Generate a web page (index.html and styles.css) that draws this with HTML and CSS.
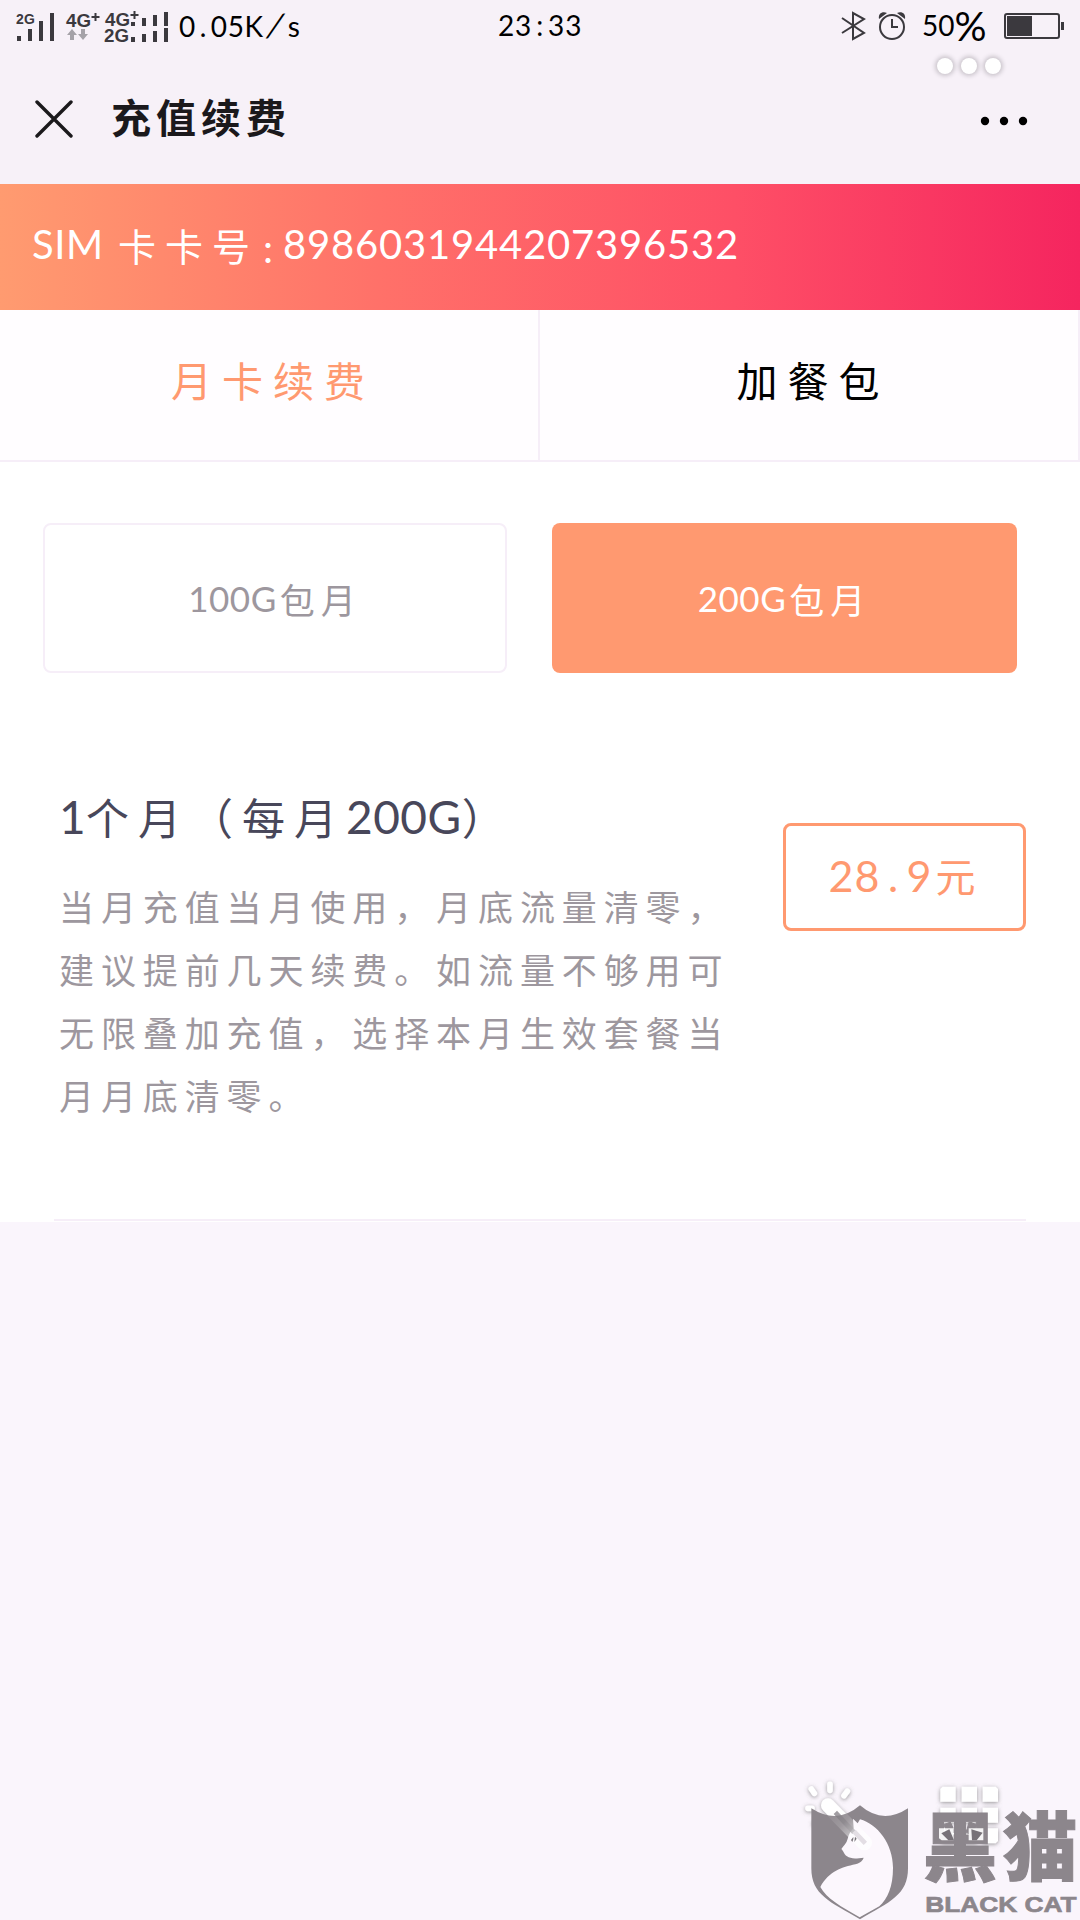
FILE: index.html
```html
<!DOCTYPE html>
<html lang="zh-CN">
<head>
<meta charset="utf-8">
<meta name="viewport" content="width=device-width,initial-scale=1">
<title>充值续费</title>
<link rel="stylesheet" href="styles.css">
</head>
<body>

<!-- ======= 状态栏 ======= -->
<div class="status">
  <svg class="signal" width="156" height="34" viewBox="0 -1 156 34">
    <g fill="#3b393e" font-family="Liberation Sans" font-weight="700">
      <text x="0" y="12" font-size="14" textLength="19">2G</text>
      <path d="M1 24h4v5H1zM12 17h4v12h-4zM23 9h4v20h-4zM34 1h4v28h-4z"/>
      <text x="50" y="14.5" font-size="18" textLength="25" lengthAdjust="spacingAndGlyphs">4G</text>
      <text x="89" y="13.5" font-size="18" textLength="25" lengthAdjust="spacingAndGlyphs">4G</text>
      <text x="88" y="29.5" font-size="18" textLength="25" lengthAdjust="spacingAndGlyphs">2G</text>
      <path d="M78.5 1h2v3h3v2h-3v3h-2V6h-3V4h3zM117.500-1h2v3h3v2h-3v3h-2V4h-3V2h3z"/>
      <path d="M115 10h4v4h-4zM126 6h4v8h-4zM137 3h4v11h-4zM148 0h4v14h-4zM115 25h4v5h-4zM126 22h4v8h-4zM137 19h4v11h-4zM148 16h4v14h-4z"/>
    </g>
    <path fill="#a5a2a8" d="M56 17l5 6h-3v5h-4v-5h-3zM67 28l-5-6h3v-5h4v5h3z"/>
  </svg>
  <span class="speed">0<i>.</i>05K<em>/</em>s</span>
  <span class="clock">23<i>:</i>33</span>
  <svg class="bt" width="26" height="30" viewBox="0 0 26 30" fill="none" stroke="#3b393e" stroke-width="2">
    <path d="M1 7l22 15-11 6V2l11 6L1 22"/>
  </svg>
  <svg class="alarm" width="28" height="30" viewBox="0 0 28 30" fill="none" stroke="#3b393e" stroke-width="2">
    <circle cx="14" cy="16" r="12"/><path d="M14 8v8h6"/>
    <path fill="#3b393e" stroke="none" d="M1 8C0 3 4 0 9 2zM27 8c1-5-3-8-8-6z"/>
  </svg>
  <span class="percent">50<b>%</b></span>
  <svg class="battery" width="60" height="26" viewBox="0 0 60 26">
    <rect x="1" y="1" width="54" height="24" rx="2" fill="none" stroke="#3b393e" stroke-width="2"/>
    <path fill="#3b393e" d="M3 3h25v20H3zM57 9h3v8h-3z"/>
  </svg>
</div>

<!-- ======= 标题栏 ======= -->
<header class="topbar">
  <svg width="38" height="38" viewBox="0 0 38 38" stroke="#1b191c" stroke-width="3.4" stroke-linecap="round">
    <path d="M2 2l34 34M36 2L2 36"/>
  </svg>
  <h1>充值续费</h1>
  <svg class="more" width="48" height="10" viewBox="0 0 48 10">
    <circle cx="5" cy="5" r="4.2"/><circle cx="24" cy="5" r="4.2"/><circle cx="43" cy="5" r="4.2"/>
  </svg>
</header>

<div class="sim"><span class="sim-en">SIM</span><span class="sim-cn">卡卡号</span><span class="colon">:</span><span class="sim-no">8986031944207396532</span></div>

<nav class="tabs">
  <a class="tab active">月卡续费</a>
  <a class="tab">加餐包</a>
</nav>

<!-- ======= 套餐 ======= -->
<section class="content">
  <div class="plans">
    <div class="plan"><span>100G</span>包月</div>
    <div class="plan on"><span>200G</span>包月</div>
  </div>
  <div class="item">
    <div class="info">
      <h2><span class="one">1</span>个月（每月<span>200G</span>）</h2>
      <p>当月充值当月使用，月底流量清零，建议提前几天续费。如流量不够用可无限叠加充值，选择本月生效套餐当月月底清零。</p>
    </div>
    <div class="price">28<i>.</i>9<span>元</span></div>
  </div>
</section>

<!-- ======= 悬浮元素 ======= -->
<div class="float-dots"><span></span><span></span><span></span></div>

<svg class="watermark" viewBox="0 0 900 480">
  <defs>
    <filter id="glow" x="-20%" y="-20%" width="140%" height="140%">
      <feDropShadow dx="0" dy="3" stdDeviation="6" flood-color="#666" flood-opacity=".7"/>
    </filter>
    <linearGradient id="wand" x1="0" y1="0" x2="1" y2="1">
      <stop offset="0" stop-color="#fff" stop-opacity="0"/>
      <stop offset=".45" stop-color="#fff" stop-opacity=".15"/>
      <stop offset="1" stop-color="#fff" stop-opacity=".8"/>
    </linearGradient>
  </defs>
  <!-- 魔术棒 + 九宫格 -->
  <g fill="#fff" filter="url(#glow)">
    <path stroke="#fff" stroke-width="17" stroke-linecap="round" d="M150 73v18M94 87l9 13M202 94l-10 13M84 145h12M105 190l4-4"/>
    <path stroke="#fff" stroke-width="42" stroke-linecap="round" d="M144 136l109 112"/>
    <path d="M488 80h39v45h-46V87zM545 80h46v45h-46zM608 80h39l7 7v38h-46z"/>
    <path d="M481 143h46v45h-46zM545 143h46v45h-46zM608 143h46v45h-46z"/>
    <path d="M481 205h46v45h-39l-7-7zM545 205h46v45h-46zM608 205h46v38l-7 7h-39z"/>
  </g>
  <!-- 盾牌 -->
  <path fill="#8c868c" d="M94 145Q172 195 240 136Q308 195 384 145V325C384 405 330 425 240 478C150 425 94 405 94 325Z"/>
  <path fill="#fcf7fd" d="M219 176l14 14 7-12c52 14 99 74 99 145 0 57-16 92-41 116l-59 33c-57-33-100-57-118-91 26-48 65-59 105-68 17-5 22-12 25-20-23 3-39 4-50-4-10-7-10-16-17-22 6-9 16-17 19-31 4-14 8-22 18-31z"/>
  <path fill="none" stroke="#777278" stroke-width="14" opacity=".75" d="M166 157l56 60"/>
  <path fill="none" stroke="url(#wand)" stroke-width="46" stroke-linecap="round" d="M144 136l109 112"/>
  <path fill="none" stroke="#e3dee4" stroke-width="14" d="M222 214l34 36"/>
  <path fill="#777278" d="M213 240l7-9v6l-3 9zM225 230l5 6-7 10z"/>
  <g fill="#8c868c" stroke="#8c868c" font-weight="900">
    <text class="cn" x="428" y="346">黑</text>
    <text class="cn" x="668" y="346">猫</text>
    <text class="en" x="436" y="456" textLength="454" lengthAdjust="spacingAndGlyphs" stroke-width="2">BLACK CAT</text>
  </g>
  <path fill="#fff" opacity=".9" d="M477 205h44v36h-36l-8-6zM566 205h44v36h-44z"/>
  <path fill="#777278" d="M484 220l24-12 14 33h-17zM574 208l34 10-18 23h-14z"/>
</svg>

</body>
</html>
```
FILE: styles.css
```css
/* ---------- 颜色 ---------- */
:root{
  --bg:#faf5fc;
  --bar:#f7f1f8;
  --line:#f6eef8;
  --orange:#ff9970;
  --muted:#9d979e;
  --title:#48475a;
}

*{margin:0;padding:0;box-sizing:border-box;}
body{position:relative;width:1080px;height:1920px;overflow:hidden;background:var(--bg);
  font-family:Lato,"Noto Sans CJK SC",sans-serif;color:#000;}
i,em{font-style:normal;display:inline-block;text-align:center;}

/* ---------- 状态栏 ---------- */
.status{display:flex;align-items:center;height:52px;padding-left:16px;background:var(--bar);font-size:28px;line-height:50px;}
.status span{white-space:nowrap;height:52px;}
.signal{margin-top:4px;}
.speed{width:126px;margin-left:7px;letter-spacing:.6px;}
.speed i{width:15px;}
.speed em{width:24px;font-size:32px;transform:skewX(-16deg);}
.clock{width:86px;margin-left:193px;letter-spacing:.8px;}
.clock i{width:16px;}
.bt{margin-left:257px;}
.alarm{margin-left:11px;}
.percent{width:68px;margin-left:16px;}
.percent b{font-weight:400;font-size:40px;line-height:1;vertical-align:-5px;}
.battery{margin-left:14px;}

/* ---------- 标题栏 ---------- */
.topbar{display:flex;align-items:center;height:132px;padding:2px 52px 0 35px;background:var(--bar);}
.topbar h1{margin:-7px 0 0 38px;font-size:40px;letter-spacing:5px;color:#1b191c;}
.more{margin-left:auto;margin-top:4px;}

.sim{display:flex;align-items:center;height:126px;padding:0 0 6px 32px;color:#fff;font-size:40px;white-space:nowrap;
  background:linear-gradient(90deg,#ff9b70 0%,#ff7169 35%,#fe4f66 68%,#f5255f 100%);}
.sim-en{width:86px;letter-spacing:.6px;}
.sim-cn{width:140px;letter-spacing:9px;font-size:38px;}
.colon{width:20px;text-align:center;margin-right:5px;padding-top:8px;}
.sim-no{letter-spacing:.8px;}

/* ---------- 标签 ---------- */
.tabs{display:flex;height:152px;background:#fffdff;border-bottom:2px solid var(--line);}
.tab{flex:1;padding:37px 0 0 8px;border-right:2px solid var(--line);text-align:center;font-size:41px;line-height:70px;letter-spacing:10px;}
.tab.active{color:var(--orange);}

/* ---------- 套餐 ---------- */
.content{height:760px;padding-top:61px;background:#fff;}
.plans{display:flex;gap:45px;padding-left:43px;}
.plan{display:flex;justify-content:center;align-items:center;width:464px;height:150px;border:2px solid var(--line);border-radius:8px;
  color:var(--muted);font-size:35px;letter-spacing:6px;}
.plan span{letter-spacing:.5px;margin-right:3px;}
.plan.on{width:465px;background:var(--orange);border:0;color:#fff;}
.item{display:flex;justify-content:space-between;margin:109px 54px 0;height:439px;border-bottom:2px solid var(--line);}
.info{width:680px;padding-left:5px;}
.info h2{display:flex;align-items:center;height:68px;font-size:43px;font-weight:400;letter-spacing:9px;color:var(--title);white-space:nowrap;}
.info h2 span{font-size:46px;letter-spacing:.5px;}
.info h2 .one{width:27px;}
.info p{margin-top:26px;font-size:35px;line-height:63px;letter-spacing:6.9px;color:var(--muted);}
.price{display:flex;justify-content:center;align-items:center;width:243px;height:108px;margin-top:41px;padding:0 4px 4px 0;
  border:3px solid var(--orange);border-radius:8px;color:var(--orange);font-size:43px;letter-spacing:1px;}
.price i{width:26px;}
.price span{margin-left:3px;font-size:40px;}

/* ---------- 悬浮 ---------- */
.float-dots{position:absolute;left:937px;top:58px;display:flex;gap:8px;}
.float-dots span{width:16px;height:16px;border-radius:50%;background:#fff;box-shadow:0 0 4px 2px #c9c3ca;}
.watermark{position:absolute;left:780px;top:1760px;width:300px;height:160px;}
.watermark .cn{font-family:"Noto Sans CJK SC",sans-serif;font-size:224px;stroke-width:3px;}
.watermark .en{font-family:"Liberation Sans",sans-serif;font-size:68px;}
```
